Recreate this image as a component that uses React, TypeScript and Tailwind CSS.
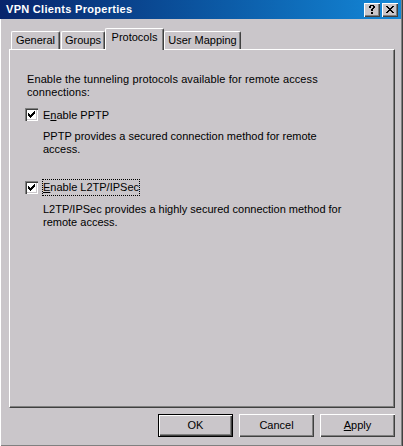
import React from "react";

const FACE = "bg-[#cac6ca]";

function CloseGlyph() {
  const rows = [
    "XX....XX",
    ".XX..XX.",
    "..XXXX..",
    "...XX...",
    "..XXXX..",
    ".XX..XX.",
    "XX....XX",
  ];
  return (
    <svg width="8" height="7" viewBox="0 0 8 7" shapeRendering="crispEdges">
      {rows.map((r, y) =>
        r.split("").map((c, x) =>
          c === "X" ? <rect key={`${x}-${y}`} x={x} y={y} width="1" height="1" fill="#000" /> : null
        )
      )}
    </svg>
  );
}

function HelpGlyph() {
  const rows = [
    ".XXXX.",
    "XX..XX",
    "XX..XX",
    "...XX.",
    "..XX..",
    "..XX..",
    "......",
    "..XX..",
    "..XX..",
  ];
  return (
    <svg width="6" height="9" viewBox="0 0 6 9" shapeRendering="crispEdges">
      {rows.map((r, y) =>
        r.split("").map((c, x) =>
          c === "X" ? <rect key={`${x}-${y}`} x={x} y={y} width="1" height="1" fill="#000" /> : null
        )
      )}
    </svg>
  );
}

function CheckGlyph() {
  const rows = [
    "......X",
    ".....XX",
    "X...XXX",
    "XX.XXX.",
    "XXXXX..",
    ".XXX...",
    "..X....",
  ];
  return (
    <svg width="7" height="7" viewBox="0 0 7 7" shapeRendering="crispEdges">
      {rows.map((r, y) =>
        r.split("").map((c, x) =>
          c === "X" ? <rect key={`${x}-${y}`} x={x} y={y} width="1" height="1" fill="#000" /> : null
        )
      )}
    </svg>
  );
}

function CaptionButton({ children }: { children: React.ReactNode }) {
  return (
    <div
      className={`w-[16px] h-[14px] ${FACE} flex items-center justify-center shadow-[inset_1px_1px_#fff,inset_-1px_-1px_#404040,inset_-2px_-2px_#808080]`}
    >
      {children}
    </div>
  );
}

function Checkbox() {
  return (
    <div className="w-[13px] h-[13px] shrink-0 bg-white flex items-center justify-center shadow-[inset_1px_1px_#808080,inset_2px_2px_#404040,inset_-1px_-1px_#fff,inset_-2px_-2px_#cac6ca]">
      <CheckGlyph />
    </div>
  );
}

function Tab({
  label,
  width,
  selected,
  className = "",
}: {
  label: string;
  width: string;
  selected?: boolean;
  className?: string;
}) {
  return (
    <div
      className={`${width} ${FACE} relative flex justify-center border-l border-t border-l-white border-t-white border-r border-r-[#404040] rounded-tl-[2px] rounded-tr-[2px] shadow-[inset_-1px_0_#808080] ${
        selected ? "h-[22px] -mb-[1px] z-10 pt-[2px]" : "h-[18px] pt-[2px]"
      } ${className}`}
    >
      <span className="leading-[13px]">{label}</span>
    </div>
  );
}

function Button({
  children,
  isDefault,
}: {
  children: React.ReactNode;
  isDefault?: boolean;
}) {
  return (
    <div
      className={`w-[75px] h-[23px] ${FACE} flex items-center justify-center leading-[13px] ${
        isDefault
          ? "border border-black shadow-[inset_1px_1px_#fff,inset_-1px_-1px_#404040,inset_-2px_-2px_#808080]"
          : "shadow-[inset_1px_1px_#fff,inset_-1px_-1px_#404040,inset_-2px_-2px_#808080]"
      }`}
    >
      {children}
    </div>
  );
}

export default function App() {
  return (
    <div
      className={`w-[403px] h-[446px] ${FACE} overflow-hidden flex flex-col text-[11px] text-black font-['Liberation_Sans',Arial,sans-serif] shadow-[inset_1px_0_#fff,inset_-1px_0_#404040,inset_-2px_0_#808080,inset_0_-1px_#808080]`}
    >
      {/* Title bar */}
      <div className="h-[19px] mr-[2px] shrink-0 flex items-center bg-gradient-to-r from-[#08246b] to-[#1488d8] pl-[6px] pr-[3px]">
        <span className="flex-1 text-white font-bold leading-[13px] tracking-[0.3px]">VPN Clients Properties</span>
        <div className="flex gap-[2px]">
          <CaptionButton>
            <HelpGlyph />
          </CaptionButton>
          <CaptionButton>
            <CloseGlyph />
          </CaptionButton>
        </div>
      </div>

      <div className="flex flex-col pl-[9px] mt-[9px]">
        {/* Tabs */}
        <div className="flex items-end h-[21px] pl-[2px]">
          <Tab label="General" width="w-[49px]" />
          <Tab label="Groups" width="w-[44px]" className="ml-[1px]" />
          <Tab label="Protocols" width="w-[59px]" selected />
          <Tab label="User Mapping" width="w-[77px]" />
        </div>

        {/* Pane */}
        <div className="w-[386px] h-[359px] border-l border-t border-l-white border-t-white border-r border-b border-r-[#404040] border-b-[#404040] shadow-[inset_-1px_-1px_#808080] pt-[23px] pl-[15px] flex flex-col">
          <p className="ml-[2px] leading-[13px] tracking-[0.1px]">
            Enable the tunneling protocols available for remote access
            <br />
            connections:
          </p>

          <div className="flex items-start mt-[9px]">
            <Checkbox />
            <span className="ml-[5px] mt-[1px] leading-[13px]">
              E<span className="underline underline-offset-[1px]">n</span>able PPTP
            </span>
          </div>
          <p className="ml-[18px] mt-[8px] leading-[13px]">
            PPTP provides a secured connection method for remote
            <br />
            access.
          </p>

          <div className="flex items-start mt-[25px]">
            <Checkbox />
            <span className="ml-[4px] -mt-[2px] leading-[13px] border border-dotted border-black py-[1px]">
              <span className="underline underline-offset-[1px]">E</span>nable L2TP/IPSec
            </span>
          </div>
          <p className="ml-[18px] mt-[7px] leading-[13px]">
            L2TP/IPSec provides a highly secured connection method for
            <br />
            remote access.
          </p>
        </div>

        {/* Buttons */}
        <div className="flex justify-end gap-[6px] mt-[6px] w-[386px]">
          <Button isDefault>OK</Button>
          <Button>Cancel</Button>
          <Button>
            <span>
              <span className="underline underline-offset-[1px]">A</span>pply
            </span>
          </Button>
        </div>
      </div>
    </div>
  );
}
